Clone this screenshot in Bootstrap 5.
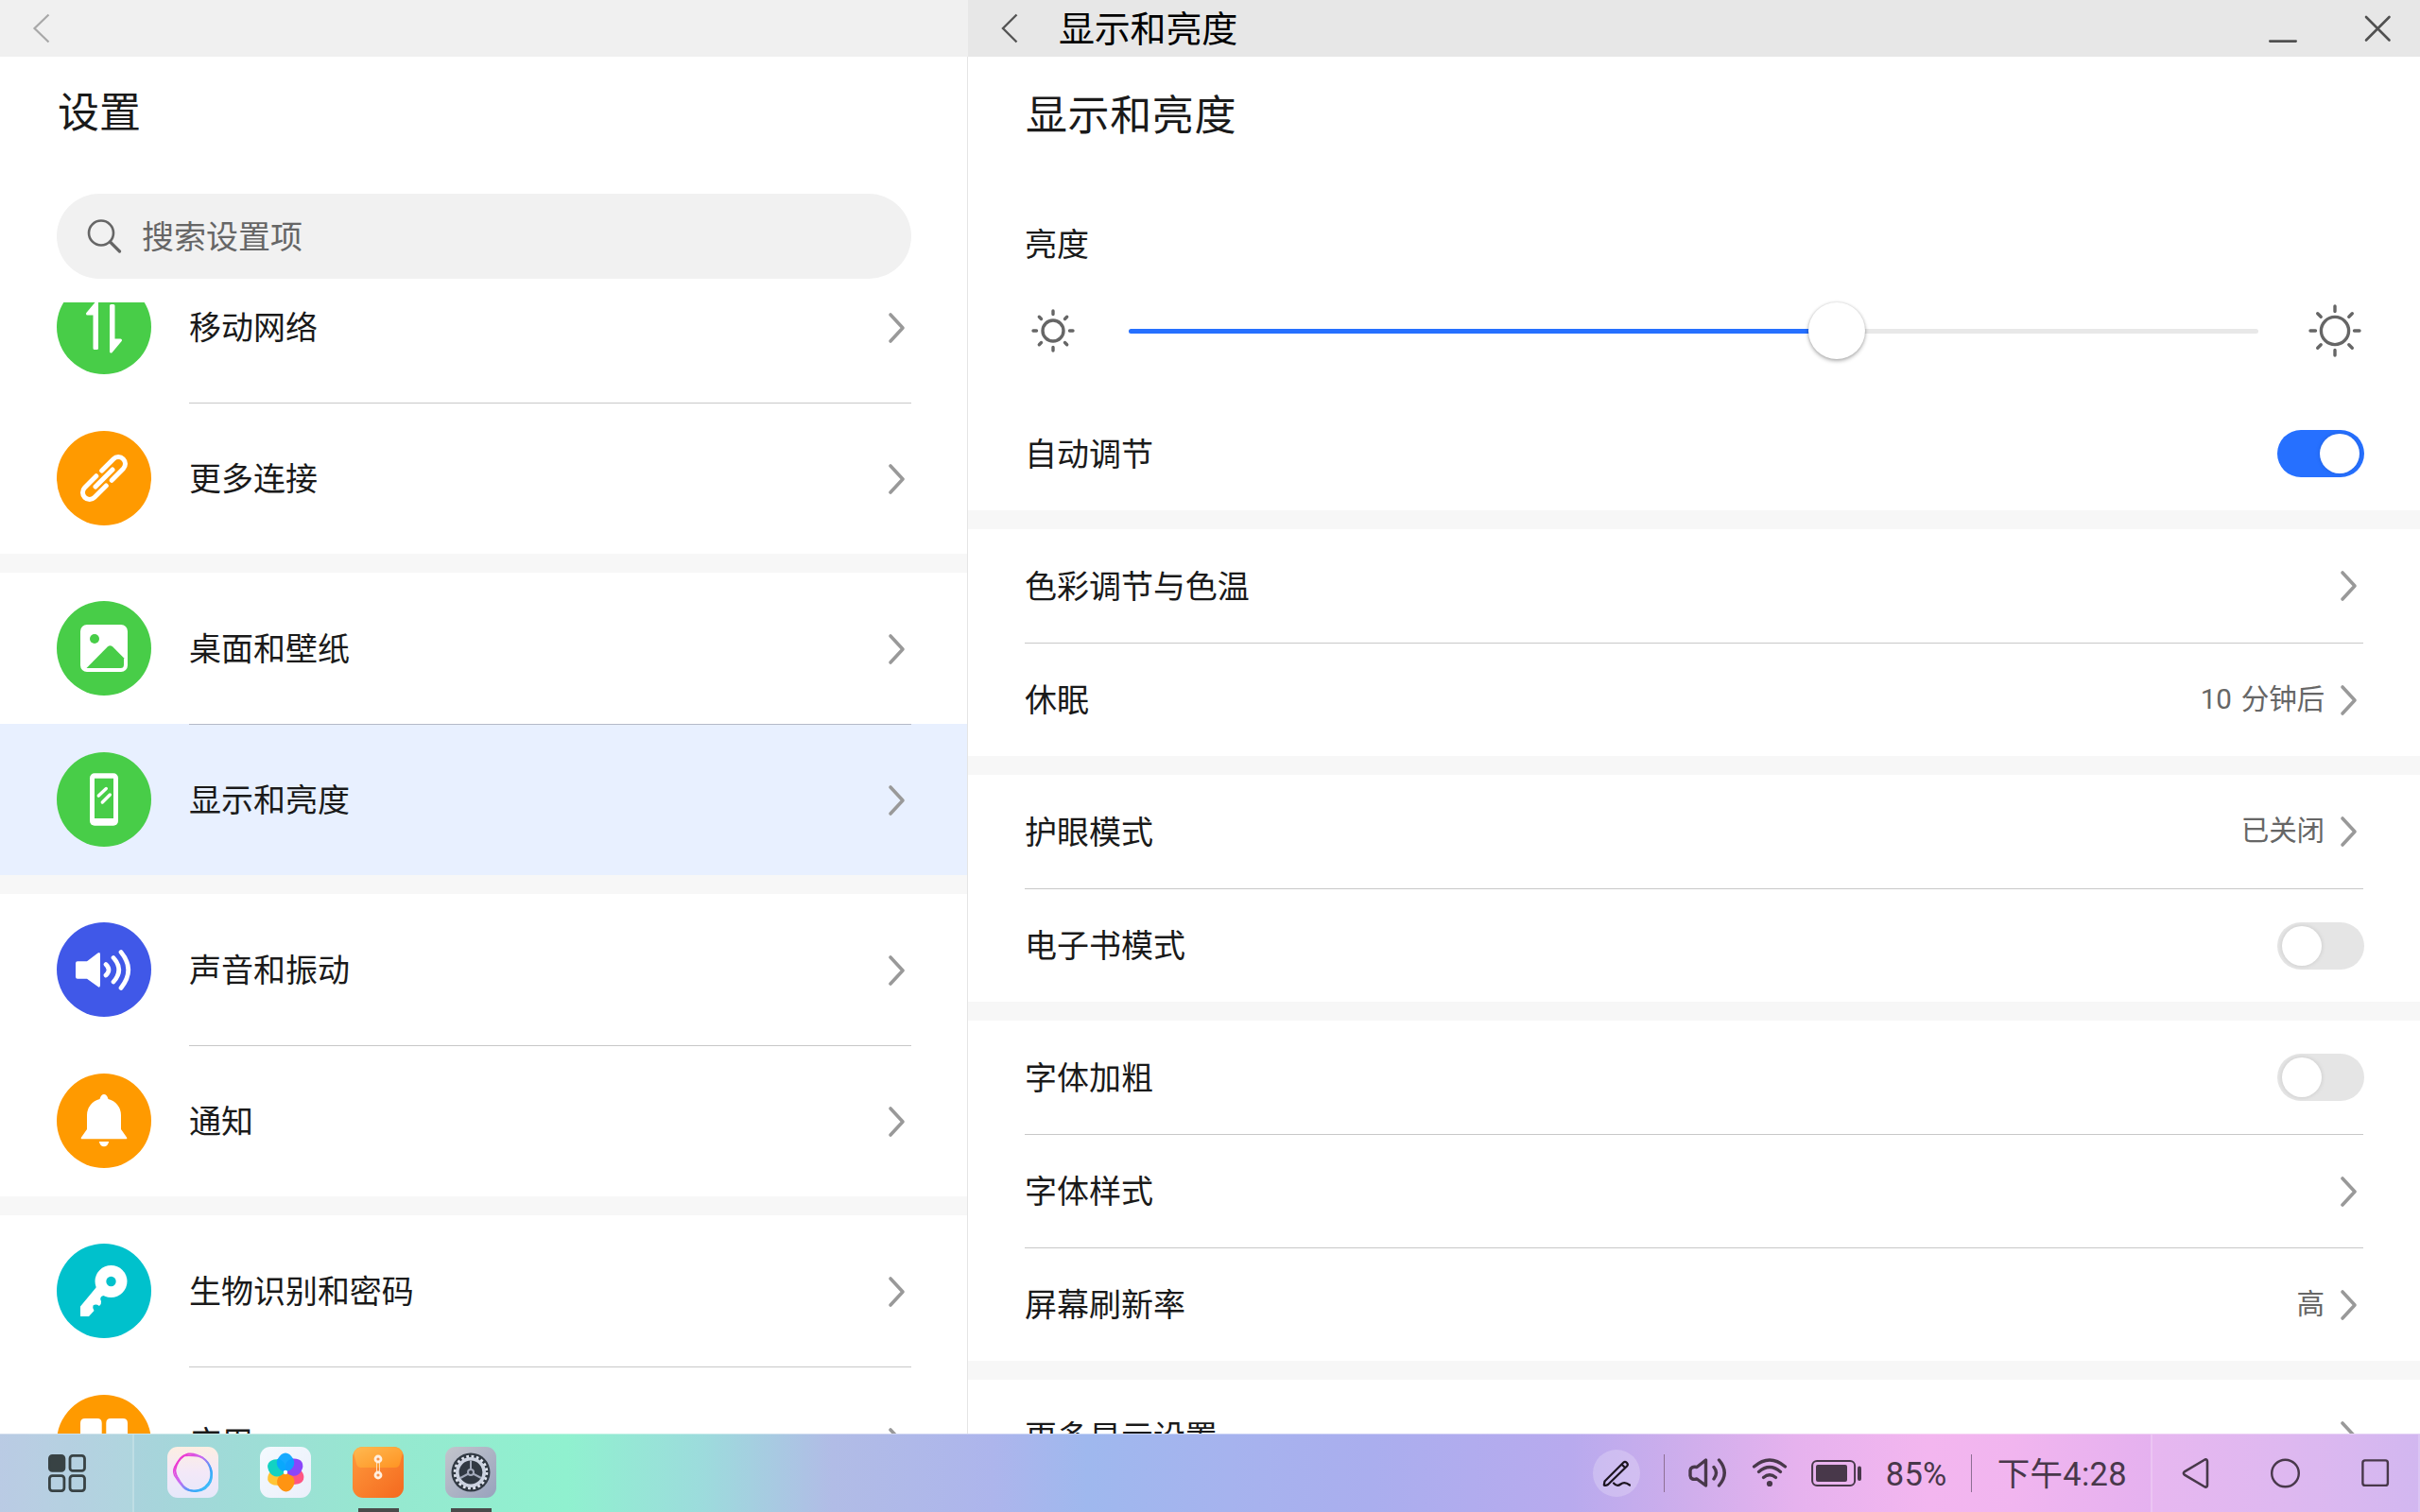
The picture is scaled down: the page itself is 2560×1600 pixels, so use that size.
<!DOCTYPE html>
<html lang="zh-CN">
<head>
<meta charset="utf-8">
<meta name="viewport" content="width=device-width, initial-scale=1">
<title>设置</title>
<link rel="stylesheet" href="https://cdn.jsdelivr.net/npm/bootstrap@5.3.0/dist/css/bootstrap.min.css">
<style>
  html, body { height: 100%; }
  body { font-family: Roboto, "Noto Sans CJK SC", sans-serif; color: #1a1a1a; font-size: 34px; line-height: 1.2; overflow: hidden; background: #fff; letter-spacing: -.03px; }
  svg { display: block; flex: none; }
  .app { height: 1600px; width: 2560px; }
  .side { width: 1024px; }
  .side-body { border-right: 1px solid #e5e5e5; }
  .bar { height: 60px; background: #f0f0f0; }
  .bar-main { background: #e7e7e7; color: #000; }
  .bar-title { font-size: 38px; margin-left: 43px; letter-spacing: -.2px; padding-top: 3px; }
  .page-title { font-size: 44px; line-height: 60px; letter-spacing: .6px; }
  .side .page-title { padding: 30px 0 0 61px; letter-spacing: 0; }
  .search { margin: 55px 59px 25px 60px; height: 90px; background: #f1f1f1; color: #666; padding-left: 30px; }
  .search-label { margin-left: 20px; padding-top: 2px; }
  .side-list { margin-top: -54px; }
  .side-row { height: 160px; padding: 0 59px 0 60px; }
  .side-row.current { background: #e8f0ff; }
  .side-cell { margin-left: 40px; padding-right: 5px; border-top: 1px solid transparent; }
  .side-cell > span, .main-row > span:first-child { padding-top: 2px; }
  .side-row + .side-row .side-cell { border-top-color: #c8c8c8; }
  .side-row.current .side-cell { border-top-color: #b4bac8 !important; }
  .gap { height: 20px; background: #f7f7f7; flex: none; }
  .main-head { padding: 33px 60px 0; }
  .main-head .page-title { padding-left: 1px; }
  .label-light { padding-top: 84px; line-height: 44px; margin-bottom: 39px; }
  .slider-row { height: 60px; padding-right: 1px; }
  .track { height: 5px; background: #e8e8e8; margin-left: 50px; margin-right: 50px; }
  .track-fill { height: 5px; background: #2670ff; }
  .knob { width: 60px; height: 60px; margin-left: -30px; background: #fff; box-shadow: 0 2px 4px rgba(0,0,0,.3), 0 0 3px rgba(0,0,0,.14); flex: none; }
  .auto-row { height: 120px; margin-top: 40px; }
  .main-group { padding: 0 60px; }
  .main-row { height: 120px; }
  .main-row + .main-row { border-top: 1px solid #c8c8c8; }
  .value { font-size: 29.6px; color: #666; margin-left: auto; margin-right: 16px; letter-spacing: -.2px; word-spacing: 3px; }
  .switch { width: 92px; height: 50px; border-radius: 25px; background: #e5e5e5; padding: 4px 5px; margin-right: -1px; }
  .switch i { width: 42px; height: 42px; border-radius: 50%; background: #fff; box-shadow: 0 0 5px rgba(0,0,0,.13); }
  .switch.on { background: #2670ff; justify-content: flex-end; }
  .chev { margin-right: 5px; }
  .taskbar { height: 83px; flex: none; color: #48384a;
    border-top: 1px solid rgba(255,255,255,.4);
    background: linear-gradient(90deg, #b5c7e2 0, #a9d3dc 145px, #a0dad8 230px, #96e8d0 400px, #90f1cf 600px, #9cdcdc 740px, #b1bce6 880px, #adb5ec 1050px, #9fb8ee 1150px, #a6b3ee 1300px, #aaaeee 1450px, #b8aaee 1660px, #d0aeec 1790px, #e6b2ee 1900px, #f3b6ef 2040px, #f1b5ef 2130px, #e5b1ef 2275px, #dcb2ef 2420px, #cfb1ef 2560px); }
  .start { width: 142px; padding-left: 51px; background: rgba(255,255,255,.08); border-right: 2px solid rgba(255,255,255,.2); }
  .dock { padding-left: 35px; gap: 44px; }
  .dock-app { height: 82px; padding-top: 13px; }
  .run-mark { width: 43px; height: 4px; background: #4a4a4a; }
  .tray { gap: 25px; }
  .pen { width: 50px; height: 50px; background: rgba(255,255,255,.22); }
  .sep { width: 1px; height: 40px; background: #8d6f93; }
  .tray-text { font-size: 34.5px; letter-spacing: .3px; padding-top: 3px; }
  .clock { margin-left: 2px; }
  .nav-keys { width: 285px; background: rgba(255,255,255,.08); border-left: 2px solid rgba(255,255,255,.2); padding-left: 31px; border-right: 2px solid rgba(255,255,255,.2); gap: 61px; }
</style>
</head>
<body>
<svg width="0" height="0" class="position-absolute">
  <defs>
    <symbol id="chev" viewBox="0 0 20 34"><path d="M3 3 16 17 3 31" fill="none" stroke="#999" stroke-width="3.600" stroke-linecap="round" stroke-linejoin="round"/></symbol>
    <path id="petal" d="M0-.5C-8.500-2-11-9.500-8-14.500Q-4.500-20.500 0-20.500T8-14.500C11-9.500 8.500-2 0-.5Z"/>
    <linearGradient id="ringBg" x1="0" y1="0" x2="0" y2="1"><stop offset="0" stop-color="#fdeee2"/><stop offset=".5" stop-color="#f3e8f8"/><stop offset="1" stop-color="#e6e8fa"/></linearGradient>
    <linearGradient id="ringLn" x1="0" y1="0" x2="1" y2=".9"><stop offset="0" stop-color="#ff22c0"/><stop offset=".45" stop-color="#c96cf2"/><stop offset=".75" stop-color="#3aa4fa"/><stop offset="1" stop-color="#3cc4f8"/></linearGradient>
    <linearGradient id="flowBg" x1="0" y1="0" x2="1" y2="1"><stop offset="0" stop-color="#f4faff"/><stop offset="1" stop-color="#ebeffa"/></linearGradient>
    <linearGradient id="orgBg" x1="0" y1="0" x2="1" y2="1"><stop offset="0" stop-color="#ff9a3c"/><stop offset="1" stop-color="#f4691f"/></linearGradient>
    <linearGradient id="orgFlap" x1="0" y1="0" x2="1" y2="1"><stop offset="0" stop-color="#ffb951"/><stop offset="1" stop-color="#ff9322"/></linearGradient>
    <linearGradient id="gearBg" x1="0" y1="0" x2="1" y2="1"><stop offset="0" stop-color="#c3c5cc"/><stop offset="1" stop-color="#98a2bd"/></linearGradient>
  </defs>
</svg>

<div class="app d-flex flex-column">
  <div class="d-flex flex-grow-1 overflow-hidden">

    <!-- settings categories -->
    <aside class="side d-flex flex-column flex-shrink-0 h-100">
      <header class="bar d-flex align-items-center flex-shrink-0">
        <svg width="60" height="60"><path d="M51.500 15.500 36.500 30 51.500 44.500" fill="none" stroke="#a8a8a8" stroke-width="2.200"/></svg>
      </header>
      <div class="side-body flex-grow-1 d-flex flex-column overflow-hidden">
        <h1 class="page-title m-0 fw-normal">设置</h1>
        <div class="search rounded-pill d-flex align-items-center flex-shrink-0">
          <svg width="40" height="40" viewBox="0 0 40 40" fill="none" stroke="#666" stroke-width="2.600" stroke-linecap="round"><circle cx="17" cy="16.500" r="13"/><path d="M26.500 26 36.500 36" stroke-width="3.200"/></svg>
          <span class="search-label">搜索设置项</span>
        </div>
        <div class="flex-grow-1 overflow-hidden">
          <div class="side-list">
            <div class="side-row d-flex align-items-center">
              <svg width="100" height="100"><circle cx="50" cy="50" r="50" fill="#48cd48"/><g fill="#fff" stroke="#fff" stroke-width="3" stroke-linejoin="round"><path d="M32.500 36 42.500 24V72.500H40V36Z"/><path d="M67.500 64 57.500 76V27.500H60V64Z"/></g></svg>
              <div class="side-cell d-flex align-items-center justify-content-between flex-grow-1 h-100"><span>移动网络</span><svg width="20" height="34"><use href="#chev"/></svg></div>
            </div>
            <div class="side-row d-flex align-items-center">
              <svg width="100" height="100"><circle cx="50" cy="50" r="50" fill="#ff9a00"/><g fill="none" stroke="#fff" stroke-width="5" stroke-linecap="round"><path d="M47.700 42.100 60 29.700A7.300 7.300 0 0 1 70.400 40L58.200 52.300"/><path d="M52.300 57.900 40 70.300A7.300 7.300 0 0 1 29.600 60L41.800 47.700"/><path d="M41 59 59 41"/></g></svg>
              <div class="side-cell d-flex align-items-center justify-content-between flex-grow-1 h-100"><span>更多连接</span><svg width="20" height="34"><use href="#chev"/></svg></div>
            </div>
            <div class="gap"></div>
            <div class="side-row d-flex align-items-center">
              <svg width="100" height="100"><circle cx="50" cy="50" r="50" fill="#48cd48"/><rect x="25" y="25" width="50" height="50" rx="7" fill="#fff"/><circle cx="40" cy="40" r="5" fill="#48cd48"/><path d="M31.500 71 53.700 48.500Q56.500 46 59.300 48.500L71 60.300V67.500Q71 71 67.500 71Z" fill="#48cd48"/></svg>
              <div class="side-cell d-flex align-items-center justify-content-between flex-grow-1 h-100"><span>桌面和壁纸</span><svg width="20" height="34"><use href="#chev"/></svg></div>
            </div>
            <div class="side-row current d-flex align-items-center">
              <svg width="100" height="100"><circle cx="50" cy="50" r="50" fill="#48cd48"/><rect x="35" y="22.300" width="30" height="55.400" rx="5" fill="#fff"/><path d="M40 27.700H60V70H40Z" fill="#48cd48"/><path d="M44.300 46 52.300 38.500M48.300 53 56.300 45" stroke="#fff" stroke-width="3.400" stroke-linecap="round"/></svg>
              <div class="side-cell d-flex align-items-center justify-content-between flex-grow-1 h-100"><span>显示和亮度</span><svg width="20" height="34"><use href="#chev"/></svg></div>
            </div>
            <div class="gap"></div>
            <div class="side-row d-flex align-items-center">
              <svg width="100" height="100"><circle cx="50" cy="50" r="50" fill="#4058e8"/><path d="M22 41.300H32L43.500 32.500Q46 31 46 34V66Q46 70 43.500 68L32 59.700H22Q20 59.700 20 57.700V43.300Q20 41.300 22 41.300Z" fill="#fff"/><path d="M52 44.500Q58 50.200 52 56M60 37.500Q71.500 50.200 60 63M68 31.500Q83.500 50.200 68 69.500" fill="none" stroke="#fff" stroke-width="4.700" stroke-linecap="round"/></svg>
              <div class="side-cell d-flex align-items-center justify-content-between flex-grow-1 h-100"><span>声音和振动</span><svg width="20" height="34"><use href="#chev"/></svg></div>
            </div>
            <div class="side-row d-flex align-items-center">
              <svg width="100" height="100"><circle cx="50" cy="50" r="50" fill="#ff9a00"/><path d="M32 59V44A18 17.500 0 0 1 45.500 27Q47 22 50 22T54.500 27A18 17.500 0 0 1 68 44V59L74 67.500Q75 69.300 73 69.300H27Q25 69.300 26 67.500ZM44.800 72H55.200Q54 77.300 50 77.300T44.800 72Z" fill="#fff"/></svg>
              <div class="side-cell d-flex align-items-center justify-content-between flex-grow-1 h-100"><span>通知</span><svg width="20" height="34"><use href="#chev"/></svg></div>
            </div>
            <div class="gap"></div>
            <div class="side-row d-flex align-items-center">
              <svg width="100" height="100"><circle cx="50" cy="50" r="50" fill="#00c1cc"/><path d="M42 46 25 66.500Q25 71 25 77H34L39.500 71Q37.500 68 38.500 65.500Q41.500 63.500 45 66Q47.500 64 47 61Q45 57.500 48 55.500L54 54Z" fill="#fff"/><circle cx="57.500" cy="40" r="17" fill="#fff"/><circle cx="57.500" cy="40" r="5.200" fill="#00c1cc"/></svg>
              <div class="side-cell d-flex align-items-center justify-content-between flex-grow-1 h-100"><span>生物识别和密码</span><svg width="20" height="34"><use href="#chev"/></svg></div>
            </div>
            <div class="side-row d-flex align-items-center">
              <svg width="100" height="100"><circle cx="50" cy="50" r="50" fill="#ff9a00"/><path d="M25 30Q25 25 30 25H43Q47.700 25 47.700 30V47.700H25ZM52.300 30Q52.300 25 57 25H70Q75 25 75 30V47.700H52.300Z" fill="#fff"/></svg>
              <div class="side-cell d-flex align-items-center justify-content-between flex-grow-1 h-100"><span>应用</span><svg width="20" height="34"><use href="#chev"/></svg></div>
            </div>
          </div>
        </div>
      </div>
    </aside>

    <!-- display settings -->
    <main class="flex-grow-1 d-flex flex-column h-100">
      <header class="bar bar-main d-flex align-items-center flex-shrink-0">
        <svg width="53" height="60"><path d="M51.500 15.500 37 30 51.500 44.500" fill="none" stroke="#555" stroke-width="2.400"/></svg>
        <span class="bar-title">显示和亮度</span>
        <svg class="ms-auto" width="160" height="60" fill="none" stroke="#505050" stroke-width="2.600" stroke-linecap="round"><path d="M1.300 43.600H28.700M103 18 127.500 42.500M127.500 18 103 42.500"/></svg>
      </header>
      <section class="main-head">
        <h2 class="page-title m-0 fw-normal">显示和亮度</h2>
        <div class="label-light">亮度</div>
        <div class="slider-row d-flex align-items-center">
          <svg width="60" height="60" viewBox="-30 -30 60 60" fill="none" stroke="#666" stroke-width="3.400" stroke-linecap="round"><circle r="11"/><path d="M0-17.500V-21M0 17.500V21M-17.500 0H-21M17.500 0H21M-12.500-12.500-14.700-14.700M12.500-12.500 14.700-14.700M-12.500 12.500-14.700 14.700M12.500 12.500 14.700 14.700"/></svg>
          <div class="track rounded-pill flex-grow-1 d-flex align-items-center">
            <div class="track-fill rounded-pill" style="width:62.7%"></div>
            <div class="knob rounded-circle"></div>
          </div>
          <svg width="60" height="60" viewBox="-31 -30 60 60" fill="none" stroke="#666" stroke-width="3.400" stroke-linecap="round"><circle r="14.600"/><path d="M0-20.500V-26M0 20.500V26M-20.500 0H-26M20.500 0H26M-14.800-14.800-18.300-18.300M14.800-14.800 18.300-18.300M-14.800 14.800-18.300 18.300M14.800 14.800 18.300 18.300"/></svg>
        </div>
        <div class="auto-row main-row d-flex align-items-center justify-content-between"><span>自动调节</span><span class="switch on d-flex"><i></i></span></div>
      </section>
      <div class="gap"></div>
      <section class="main-group">
        <div class="main-row d-flex align-items-center justify-content-between"><span>色彩调节与色温</span><svg class="chev" width="20" height="34"><use href="#chev"/></svg></div>
        <div class="main-row d-flex align-items-center"><span>休眠</span><span class="value">10 分钟后</span><svg class="chev" width="20" height="34"><use href="#chev"/></svg></div>
      </section>
      <div class="gap"></div>
      <section class="main-group">
        <div class="main-row d-flex align-items-center"><span>护眼模式</span><span class="value">已关闭</span><svg class="chev" width="20" height="34"><use href="#chev"/></svg></div>
        <div class="main-row d-flex align-items-center justify-content-between"><span>电子书模式</span><span class="switch d-flex"><i></i></span></div>
      </section>
      <div class="gap"></div>
      <section class="main-group">
        <div class="main-row d-flex align-items-center justify-content-between"><span>字体加粗</span><span class="switch d-flex"><i></i></span></div>
        <div class="main-row d-flex align-items-center justify-content-between"><span>字体样式</span><svg class="chev" width="20" height="34"><use href="#chev"/></svg></div>
        <div class="main-row d-flex align-items-center"><span>屏幕刷新率</span><span class="value">高</span><svg class="chev" width="20" height="34"><use href="#chev"/></svg></div>
      </section>
      <div class="gap"></div>
      <section class="main-group">
        <div class="main-row d-flex align-items-center justify-content-between"><span>更多显示设置</span><svg class="chev" width="20" height="34"><use href="#chev"/></svg></div>
      </section>
    </main>
  </div>

  <!-- taskbar -->
  <footer class="taskbar d-flex align-items-center">
    <div class="start d-flex align-items-center h-100">
      <svg width="40" height="40" fill="none" stroke="#384244" stroke-width="2.800"><rect x="1.400" y="1.400" width="15.500" height="16" rx="3" fill="#384244"/><rect x="23" y="1.400" width="15.500" height="16" rx="3"/><rect x="1.400" y="22.600" width="15.500" height="16" rx="3"/><rect x="23" y="22.600" width="15.500" height="16" rx="3"/></svg>
    </div>
    <div class="dock d-flex">
      <div class="dock-app d-flex flex-column align-items-center justify-content-between">
        <svg width="54" height="54"><rect width="54" height="54" rx="11" fill="url(#ringBg)"/><g fill="none" stroke="url(#ringLn)" stroke-width="1.500"><path d="M19 8.500Q24 6 31 8.500Q41 12 45 20Q49 28 46 37Q42 46 32 47Q22 48 17 43Q11 36 7.500 30Q5 24 10 18Q14 10 19 8.500Z"/><path d="M18 9.500Q25 9 33 10Q42 13 45 22Q48 32 43 40Q38 47 28 46.500Q19 46 14 38Q9 31 8.500 25Q10 15 18 9.500Z"/><path d="M22 7.500Q31 8.500 37 11Q46 18 47 27Q47 36 40 42Q32 48 23 46Q16 42 12 34Q7 28 8 22Q12 11 22 7.500Z"/></g></svg>
      </div>
      <div class="dock-app d-flex flex-column align-items-center justify-content-between">
        <svg width="54" height="54"><rect width="54" height="54" rx="11" fill="url(#flowBg)"/><g transform="translate(27 27)"><use href="#petal" fill="#ff5583" transform="rotate(112)"/><use href="#petal" fill="#ffc536" transform="rotate(-118)"/><use href="#petal" fill="#ff9412" transform="rotate(178)"/><use href="#petal" fill="#8a46fa" transform="rotate(58)"/><use href="#petal" fill="#12d2c2" transform="rotate(-62)"/><use href="#petal" fill="#0aa5ff" fill-opacity=".95"/><circle r="2.200" fill="#fff"/></g></svg>
      </div>
      <div class="dock-app d-flex flex-column align-items-center justify-content-between">
        <svg width="54" height="54"><rect width="54" height="54" rx="11" fill="url(#orgBg)"/><path d="M1 6Q4 0 11 0H43Q50 0 53 6L50 18Q49 22 45 22H9Q5 22 4 18Z" fill="url(#orgFlap)"/><path d="M25.500 15V30M28.500 15V30" stroke="#ffd9b4" stroke-width="1"/><circle cx="27" cy="13" r="3" fill="#f6904a" stroke="#fff0e0" stroke-width="2.800"/><circle cx="27" cy="30" r="3" fill="#f6904a" stroke="#fff0e0" stroke-width="2.800"/></svg>
        <span class="run-mark"></span>
      </div>
      <div class="dock-app d-flex flex-column align-items-center justify-content-between">
        <svg width="54" height="54"><rect width="54" height="54" rx="11" fill="url(#gearBg)"/><circle cx="27" cy="27" r="20.500" fill="#313943"/><circle cx="27" cy="27" r="16.800" fill="none" stroke="#dfe3ee" stroke-width="3" stroke-dasharray="2.800 2.478"/><circle cx="27" cy="27" r="14.200" fill="none" stroke="#ccd2e0" stroke-width="3.600"/><path d="M27 24V14.500M24.500 28.500 16 33M29.500 28.500 38 33" stroke="#a2a9ba" stroke-width="2"/><circle cx="27" cy="27" r="3" fill="#313943" stroke="#a2a9ba" stroke-width="2"/></svg>
        <span class="run-mark"></span>
      </div>
    </div>

    <div class="tray d-flex align-items-center ms-auto h-100">
      <div class="pen rounded-circle d-flex align-items-center justify-content-center">
        <svg width="30" height="30" fill="none" stroke="#1c1420" stroke-width="2.200" stroke-linecap="round" stroke-linejoin="round"><path d="M1.800 27.500 2.500 23.500 22.500 3.500Q24 2 25.800 3.700T26.300 7.200L6 27Q3.500 28.500 1.800 27.500ZM20.500 5.500 24.200 9.200"/><path d="M12 25.500Q15.500 29.500 19.500 26.500T29 27.500"/></svg>
      </div>
      <div class="sep"></div>
      <svg width="42" height="34" fill="none" stroke="#48384a" stroke-width="3.400" stroke-linecap="round" stroke-linejoin="round"><path d="M9 10.500 18.500 3V30L9 23Q2.500 24.500 2 19.500V14Q2.500 9.500 9 10.500Z"/><path d="M27 10.500Q32 16.500 27 23M32.500 3Q44 16.500 32.500 30"/></svg>
      <svg width="38" height="34" fill="none" stroke="#48384a" stroke-width="3.200" stroke-linecap="round"><path d="M2.500 10Q19-4 35.500 10M7.500 15.500Q19 5.500 30.500 15.500M12.500 21.500Q19 16 25.500 21.500"/><circle cx="19" cy="28" r="3.100" fill="#48384a" stroke="none"/></svg>
      <svg width="54" height="30"><rect x="1.100" y="2.100" width="45" height="26" rx="5" fill="none" stroke="#48384a" stroke-width="2"/><rect x="5" y="6" width="33" height="18" rx="2" fill="#48384a"/><rect x="49" y="7.500" width="4" height="15.500" rx="2" fill="#48384a"/></svg>
      <span class="tray-text">85%</span>
      <div class="sep"></div>
      <span class="tray-text clock">下午4:28</span>
      <div class="nav-keys d-flex align-items-center h-100">
        <svg width="32" height="34" fill="none" stroke="#48384a" stroke-width="2.600" stroke-linejoin="round"><path d="M2.800 15.400 24.500 2.500Q27 2 27 4.500V29.500Q27 32 24.500 31.500L2.800 18.600Q1 17 2.800 15.400Z"/></svg>
        <svg width="36" height="34" fill="none" stroke="#48384a" stroke-width="2.400"><circle cx="16.500" cy="17" r="14.300"/></svg>
        <svg width="30" height="30" fill="none" stroke="#48384a" stroke-width="2.400"><rect x="1.400" y="1.400" width="26.500" height="26.500" rx="2.500"/></svg>
      </div>
    </div>
  </footer>
</div>
<script src="https://cdn.jsdelivr.net/npm/bootstrap@5.3.0/dist/js/bootstrap.bundle.min.js"></script>
</body>
</html>
